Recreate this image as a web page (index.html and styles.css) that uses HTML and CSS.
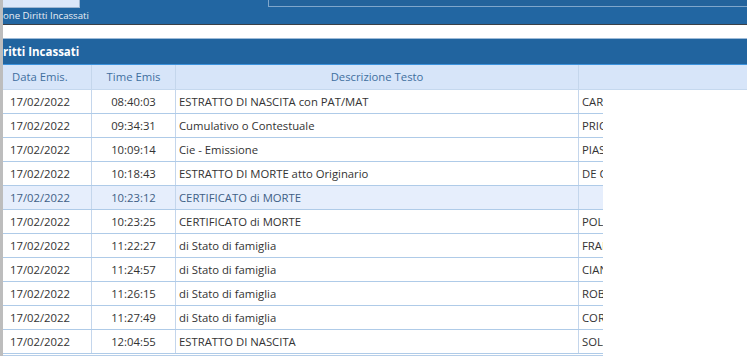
FILE: index.html
```html
<!DOCTYPE html>
<html>
<head>
<meta charset="utf-8">
<link rel="stylesheet" href="styles.css">
</head>
<body>
<div class="page">
  <div class="gutter"></div>
  <div class="main">
    <div class="topbar">
      <div class="tabs">
        <div class="tab"></div>
        <div class="panel"></div>
      </div>
      <div class="crumb">one Diritti Incassati</div>
    </div>
    <div class="strip"></div>
    <div class="titlebar">ritti Incassati</div>
    <div class="grid-head">
      <div class="hc left">Data Emis.</div>
      <div class="hc center">Time Emis</div>
      <div class="hc center">Descrizione Testo</div>
      <div class="hc"></div>
    </div>
    <div class="rows">
      <div class="row"><div class="c left">17/02/2022</div><div class="c center">08:40:03</div><div class="c">ESTRATTO DI NASCITA con PAT/MAT</div><div class="c clip">CARDINALI</div></div>
      <div class="row"><div class="c left">17/02/2022</div><div class="c center">09:34:31</div><div class="c">Cumulativo o Contestuale</div><div class="c clip">PRICOLO</div></div>
      <div class="row"><div class="c left">17/02/2022</div><div class="c center">10:09:14</div><div class="c">Cie - Emissione</div><div class="c clip">PIASTRA</div></div>
      <div class="row"><div class="c left">17/02/2022</div><div class="c center">10:18:43</div><div class="c">ESTRATTO DI MORTE atto Originario</div><div class="c clip">DE CARO</div></div>
      <div class="row sel"><div class="c left">17/02/2022</div><div class="c center">10:23:12</div><div class="c">CERTIFICATO di MORTE</div><div class="c clip"></div></div>
      <div class="row"><div class="c left">17/02/2022</div><div class="c center">10:23:25</div><div class="c">CERTIFICATO di MORTE</div><div class="c clip">POLI</div></div>
      <div class="row"><div class="c left">17/02/2022</div><div class="c center">11:22:27</div><div class="c">di Stato di famiglia</div><div class="c clip">FRANCO</div></div>
      <div class="row"><div class="c left">17/02/2022</div><div class="c center">11:24:57</div><div class="c">di Stato di famiglia</div><div class="c clip">CIANI</div></div>
      <div class="row"><div class="c left">17/02/2022</div><div class="c center">11:26:15</div><div class="c">di Stato di famiglia</div><div class="c clip">ROBERTI</div></div>
      <div class="row"><div class="c left">17/02/2022</div><div class="c center">11:27:49</div><div class="c">di Stato di famiglia</div><div class="c clip">CORSI</div></div>
      <div class="row"><div class="c left">17/02/2022</div><div class="c center">12:04:55</div><div class="c">ESTRATTO DI NASCITA</div><div class="c clip">SOLARI</div></div>
    </div>
    <div class="bottom"></div>
  </div>
</div>
</body>
</html>
```
FILE: styles.css
```css
html, body {
  margin: 0;
  padding: 0;
  background: #ffffff;
  overflow: hidden;
}
body {
  font-family: "Open Sans", "Noto Sans", sans-serif;
  width: 747px;
  height: 356px;
}
.page {
  display: flex;
  height: 356px;
}
.gutter {
  width: 3px;
  background: #bdbdbd;
  flex: none;
}
.main {
  flex: 1;
  display: flex;
  flex-direction: column;
  min-width: 0;
}
.topbar {
  height: 24px;
  background: #2266a2;
  border-bottom: 1px solid #3a4048;
  display: flex;
  flex-direction: column;
}
.tabs {
  height: 8px;
  display: flex;
}
.tab {
  width: 76px;
  height: 7px;
  background: #dbe7f9;
  border-right: 1px solid #9fb7d2;
  border-bottom: 1px solid #9fb7d2;
}
.panel {
  margin-left: 188px;
  flex: 1;
  height: 6px;
  background: #23639c;
  border-left: 1px solid #7fa6cb;
  border-bottom: 1px solid #7fa6cb;
}
.crumb {
  font-size: 9.6px;
  color: #e9eef4;
  line-height: 15px;
  padding-left: 0;
  white-space: nowrap;
}
.strip {
  height: 13px;
  background: #ffffff;
  border-bottom: 1px solid #9ebbd8;
}
.titlebar {
  height: 25px;
  background: #21649f;
  border-bottom: 1px solid #3c92dc;
  color: #ffffff;
  font-weight: 700;
  font-size: 11.5px;
  line-height: 26px;
  white-space: nowrap;
}
.grid-head {
  display: grid;
  grid-template-columns: 89px 84px 403px 1fr;
  height: 24px;
  background: #d7e5f9;
  border-bottom: 1px solid #c5d8ee;
}
.hc {
  font-size: 11.3px;
  color: #3f6f9f;
  line-height: 23px;
  border-right: 1px solid #c4d6ec;
  white-space: nowrap;
}
.hc:last-child { border-right: none; }
.rows {
  width: 600px;
  display: flex;
  flex-direction: column;
}
.row {
  display: grid;
  grid-template-columns: 89px 84px 403px 24px;
  height: 24px;
  border-bottom: 1px solid #afcbe8;
  box-sizing: border-box;
}
.row.sel { background: #e6eefc; }
.row.sel .c { color: #3f5f86; }
.c {
  font-size: 11.3px;
  color: #333333;
  line-height: 23px;
  border-right: 1px solid #c4d6ec;
  white-space: nowrap;
  overflow: hidden;
  padding-left: 3px;
}
.c.left { padding-left: 7px; }
.c.center { text-align: center; padding-left: 0; }
.c.clip { border-right: none; padding-left: 3px; }
.hc.left { padding-left: 9px; }
.hc.center { text-align: center; }
.bottom {
  width: 600px;
  height: 1px;
  border-bottom: 1px solid #b6cee8;
}
```
